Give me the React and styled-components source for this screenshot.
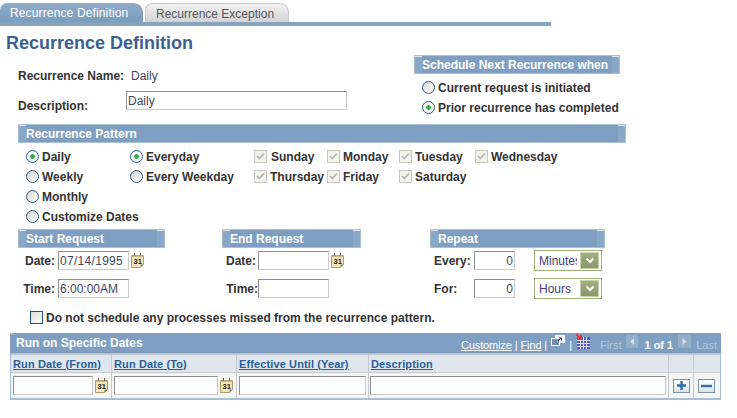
import React from "react";
import styled, { createGlobalStyle } from "styled-components";

const Global = createGlobalStyle`
  html, body { margin: 0; padding: 0; background: #fff; }
  body { font-family: "Liberation Sans", Arial, sans-serif; font-size: 12px; color: #333; }
`;

const Page = styled.div`
  width: 737px;
  height: 418px;
  overflow: hidden;
  padding-top: 3px;
  box-sizing: border-box;
`;
const TabBar = styled.div`
  display: flex;
  gap: 2px;
  width: 551px;
  height: 23px;
  box-sizing: border-box;
  border-bottom: 4px solid #86a3c0;
`;
const Tab = styled.div`
  width: ${p => p.$w}px;
  height: 19px;
  box-sizing: border-box;
  padding-left: 10px;
  font-size: 12px;
  line-height: 20px;
  letter-spacing: ${p => p.$active ? "0.14px" : "0"};
  border-radius: 7px 9px 0 0;
  color: ${p => p.$active ? "#fff" : "#555"};
  background: ${p => p.$active ? "linear-gradient(#8fabc8, #7c9cbd)" : "linear-gradient(#f1f1f1, #d4d4d6)"};
  border: ${p => p.$active ? "0" : "1px solid #c8c8c8"};
  border-bottom: 0;
`;
const Title = styled.h1`
  margin: 5px 0 0 6px;
  font-size: 18px;
  line-height: 24px;
  font-weight: bold;
  color: #3b5f8e;
`;
const Top = styled.div`
  display: flex;
  padding-left: 18px;
`;
const TopLeft = styled.div`
  width: 396px;
  padding-top: 14px;
`;
const NameRow = styled.div`
  display: flex;
  height: 16px;
  line-height: 15px;
`;
const DescRow = styled.div`
  display: flex;
  margin-top: 6px;
`;
const Label = styled.span`
  font-weight: bold;
  color: #333;
  white-space: nowrap;
`;
const NameLabel = styled(Label)`
  width: 113px;
`;
const DescLabel = styled(Label)`
  width: 108px;
  padding-top: 8px;
`;
const Value = styled.span`
  color: #3f3f5f;
`;
const TopRight = styled.div`
  width: 206px;
`;
const SectionBar = styled.div`
  position: relative;
  width: ${p => p.$w}px;
  height: 19px;
  box-sizing: border-box;
  border: 1px solid #a8c0d8;
  background: #7f9fc2;
  color: #fff;
  font-weight: bold;
  font-size: 12px;
  line-height: 19px;
  padding-left: 7px;
  &::before, &::after {
    content: "";
    position: absolute;
    top: 0;
    width: 7px;
    height: 17px;
    background: linear-gradient(#dfe8f0 0 1px, #8aa7c6 1px);
  }
  &::before { left: 0; }
  &::after { right: 0; }
`;
const SectionRow = styled.div`
  display: flex;
  padding-left: 18px;
  margin-top: ${p => p.$top}px;
`;
const RadioStack = styled.div`
  display: flex;
  flex-direction: column;
  gap: 5px;
  padding: 6px 0 0 8px;
`;
const Opt = styled.label`
  display: flex;
  align-items: center;
  height: 15px;
  font-weight: bold;
  color: #333;
  white-space: nowrap;
  gap: ${p => p.$gap ?? 3}px;
`;
const Radio = styled.span`
  flex: none;
  width: 13px;
  height: 13px;
  box-sizing: border-box;
  border-radius: 50%;
  border: 1px solid #2a5a85;
  background: ${p => p.$on
    ? "radial-gradient(circle, #2fb344 0 2px, #d9f0d9 2.6px, #fff 3px, #ecece6 100%)"
    : "linear-gradient(135deg, #d6d6d0, #fff)"};
`;
const Pattern = styled.div`
  display: flex;
  padding: 6px 0 0 26px;
  height: 75px;
`;
const Col = styled.div`
  display: flex;
  flex-direction: column;
  gap: 5px;
  width: ${p => p.$w}px;
`;
const Days = styled.div`
  display: grid;
  grid-template-columns: 73px 72px 76px auto;
  grid-auto-rows: 15px;
  row-gap: 5px;
  justify-content: start;
`;
const Check = styled.span`
  flex: none;
  display: inline-flex;
  width: 13px;
  height: 13px;
  box-sizing: border-box;
  border: 1px solid ${p => p.$off ? "#c8c6bc" : "#1f5180"};
  background: ${p => p.$off ? "#f3f3ee" : "linear-gradient(135deg, #dcdcd6, #fff)"};
`;
const TickIcon = () => (
  <svg width="11" height="11" viewBox="0 0 11 11">
    <path d="M2 5l2.3 2.4L9 2.6" fill="none" stroke="#b9b9b0" strokeWidth="1.8" />
  </svg>
);
const ReqCol = styled.div`
  width: ${p => p.$w}px;
`;
const FieldGrid = styled.div`
  display: grid;
  grid-template-columns: ${p => p.$cols};
  grid-auto-rows: 19px;
  row-gap: 9px;
  padding-top: 3px;
  align-items: center;
`;
const RightLabel = styled(Label)`
  text-align: right;
  padding-right: ${p => p.$pr}px;
`;
const RepeatLabel = styled(Label)`
  padding-left: 4px;
`;
const Input = styled.input`
  display: block;
  width: ${p => p.$w}px;
  height: 19px;
  box-sizing: border-box;
  padding: 0 1px;
  margin: 0;
  border: 1px solid;
  border-color: #8f8f8f #cacaca #cacaca #8f8f8f;
  background: #fff;
  color: #444460;
  font: 12px "Liberation Sans", Arial, sans-serif;
  letter-spacing: ${p => p.$spaced ? "0.3px" : "0"};
  text-align: ${p => p.$right ? "right" : "left"};
  outline: none;
`;
const DateCell = styled.div`
  display: flex;
  align-items: center;
  gap: 2px;
`;
const Cal = () => (
  <svg width="13" height="15" viewBox="0 0 13 15" style={{ flex: "none" }}>
    <path d="M.5 2.5h12v9l-3 3h-9z" fill="#f3e5b5" stroke="#a89a70" />
    <path d="M.5 2.5h12v1.5H.5z" fill="#c9b884" />
    <path d="M3.5 0v3M9.5 0v3" stroke="#6f6a55" />
    <path d="M12.5 11.5l-3 3v-3z" fill="#8f8460" />
    <text x="2.5" y="10.5" fontSize="7.5" fontWeight="bold" fontFamily="Liberation Sans" fill="#222">31</text>
  </svg>
);
const SelectBox = styled.div`
  display: flex;
  align-items: center;
  width: 68px;
  height: 21px;
  box-sizing: border-box;
  border: 1px solid #9fb277;
  padding: 0 2px 0 4px;
  color: #443d78;
  font-size: 12px;
  background: #fff;
`;
const SelectText = styled.span`
  width: 39px;
  overflow: hidden;
  white-space: nowrap;
  margin-right: 3px;
`;
const SelectBtn = styled.span`
  flex: none;
  display: inline-flex;
  align-items: center;
  justify-content: center;
  width: 19px;
  height: 17px;
  box-sizing: border-box;
  border: 1px solid #c9d2b0;
  background: linear-gradient(#a3ae84, #8a9868);
`;
const Chevron = () => (
  <svg width="10" height="7" viewBox="0 0 10 7">
    <path d="M1.5 1.5L5 5l3.5-3.5" fill="none" stroke="#fff" strokeWidth="2" />
  </svg>
);
const NoMiss = styled.label`
  display: flex;
  align-items: center;
  gap: 3px;
  height: 15px;
  margin: 12px 0 0 30px;
  font-weight: bold;
  color: #333;
`;
const GridBox = styled.div`
  width: 711px;
  margin: 8px 0 0 10px;
  box-sizing: border-box;
  border: 1px solid #a6bed6;
  border-top: 0;
  border-bottom-width: 2px;
`;
const GridTitle = styled.div`
  display: flex;
  align-items: center;
  height: 20px;
  margin: 0 -1px;
  padding: 0 3px 0 6px;
  border-radius: 4px 0 0 0;
  background: #7f9fc2;
  color: #fff;
  font-weight: bold;
  font-size: 12px;
`;
const GridName = styled.span`
  flex: 1;
`;
const Nav = styled.div`
  display: flex;
  align-items: center;
  padding-top: 4px;
  font-size: 11px;
  font-weight: normal;
  color: #fff;
`;
const NavLink = styled.span`
  text-decoration: underline;
  letter-spacing: -0.15px;
`;
const Sep = styled.span`
  margin: ${p => p.$m || "0 3px"};
`;
const Dim = styled.span`
  color: #b5c5d8;
  margin: ${p => p.$m};
`;
const Count = styled.span`
  font-weight: bold;
  margin: 0 5px 0 6px;
`;
const Cols = styled.div`
  display: grid;
  grid-template-columns: 101px 125px 132px 300px 25px 25px;
  background: ${p => p.$head ? "#dfe6ed" : "#f6f6f5"};
  height: ${p => p.$h}px;
  border-top: 1px solid #c4cad0;
`;
const HeadRowTop = styled.div`
  height: 1px;
  background: #a6bed6;
  margin: 0 -1px;
`;
const Cell = styled.div`
  display: flex;
  align-items: center;
  gap: 2px;
  box-sizing: border-box;
  padding-left: ${p => p.$pad ?? 2}px;
  border-right: ${p => p.$last ? "0" : "1px solid #c4cad0"};
`;
const HeadLink = styled.span`
  font-weight: bold;
  font-size: 11px;
  letter-spacing: 0.12px;
  color: #2a5f99;
  text-decoration: underline;
  white-space: nowrap;
`;
const SquareBtn = styled.span`
  display: inline-flex;
  align-items: center;
  justify-content: center;
  width: 17px;
  height: 14px;
  box-sizing: border-box;
  border: 1px solid #7a93a8;
  background: linear-gradient(#fff, #dbe3ea);
`;
const PlusIcon = () => (
  <svg width="9" height="9" viewBox="0 0 9 9"><path d="M4.5 0v9M0 4.5h9" stroke="#2f6eab" strokeWidth="2.4" /></svg>
);
const MinusIcon = () => (
  <svg width="11" height="4" viewBox="0 0 11 4"><path d="M0 2h11" stroke="#2f6eab" strokeWidth="2.4" /></svg>
);
const ZoomIcon = () => (
  <svg width="14" height="11" viewBox="0 0 14 11" style={{ marginTop: -9, marginLeft: 1 }}>
    <rect x="4.5" y=".5" width="9" height="7" fill="#e8eef4" stroke="#fff" />
    <rect x=".5" y="3.5" width="8" height="7" fill="#6f8db0" stroke="#fff" />
    <path d="M7 6l3-3M8 3h2.5v2.5" fill="none" stroke="#334" />
  </svg>
);
const ColsIcon = () => (
  <svg width="14" height="15" viewBox="0 0 14 15" style={{ marginTop: -8 }}>
    <rect x="1" y="3" width="13" height="12" fill="#5a55c4" />
    <path d="M4.5 3v12M7.5 3v12M10.5 3v12M1 6.5h13M1 9.5h13M1 12.5h13" stroke="#dcdcf4" />
    <path d="M0 0l5 5M5 1v4H1" fill="none" stroke="#e33" strokeWidth="1.8" />
  </svg>
);
const ArrowBox = ({ dir, w }) => (
  <svg width={w} height="13" viewBox={`0 0 ${w} 13`} style={{ marginTop: -7 }}>
    <rect width={w} height="13" fill="#95afcb" />
    <path d={dir === "l" ? "M8 3v7L4 6.5z" : "M4.5 3v7l4-3.5z"} fill="#d6e0ea" />
  </svg>
);

const days = [
  ["Sunday", 4], ["Monday", 3], ["Tuesday", 3], ["Wednesday", 3],
  ["Thursday", 3], ["Friday", 3], ["Saturday", 3],
];

export default function App() {
  return (
    <Page>
      <Global />
      <TabBar>
        <Tab $active $w={143}>Recurrence Definition</Tab>
        <Tab $w={144}>Recurrence Exception</Tab>
      </TabBar>
      <Title>Recurrence Definition</Title>
      <Top>
        <TopLeft>
          <NameRow>
            <NameLabel>Recurrence Name:</NameLabel>
            <Value>Daily</Value>
          </NameRow>
          <DescRow>
            <DescLabel>Description:</DescLabel>
            <Input $w={221} value="Daily" readOnly />
          </DescRow>
        </TopLeft>
        <TopRight>
          <SectionBar $w={206}>Schedule Next Recurrence when</SectionBar>
          <RadioStack>
            <Opt><Radio />Current request is initiated</Opt>
            <Opt><Radio $on />Prior recurrence has completed</Opt>
          </RadioStack>
        </TopRight>
      </Top>
      <SectionRow $top={9}>
        <SectionBar $w={608}>Recurrence Pattern</SectionBar>
      </SectionRow>
      <Pattern>
        <Col $w={104}>
          <Opt><Radio $on />Daily</Opt>
          <Opt><Radio />Weekly</Opt>
          <Opt><Radio />Monthly</Opt>
          <Opt><Radio />Customize Dates</Opt>
        </Col>
        <Col $w={124}>
          <Opt><Radio $on />Everyday</Opt>
          <Opt><Radio />Every Weekday</Opt>
        </Col>
        <Days>
          {days.map(([d, g]) => (
            <Opt key={d} $gap={g}><Check $off><TickIcon /></Check>{d}</Opt>
          ))}
        </Days>
      </Pattern>
      <SectionRow $top={5}>
        <ReqCol $w={204}>
          <SectionBar $w={147}>Start Request</SectionBar>
          <FieldGrid $cols="40px 1fr">
            <RightLabel $pr={3}>Date:</RightLabel>
            <DateCell><Input $w={71} $spaced value="07/14/1995" readOnly /><Cal /></DateCell>
            <RightLabel $pr={3}>Time:</RightLabel>
            <DateCell><Input $w={71} value="6:00:00AM" readOnly /></DateCell>
          </FieldGrid>
        </ReqCol>
        <ReqCol $w={208}>
          <SectionBar $w={139}>End Request</SectionBar>
          <FieldGrid $cols="36px 1fr">
            <RightLabel $pr={2}>Date:</RightLabel>
            <DateCell><Input $w={71} value="" readOnly /><Cal /></DateCell>
            <RightLabel $pr={0}>Time:</RightLabel>
            <DateCell><Input $w={71} value="" readOnly /></DateCell>
          </FieldGrid>
        </ReqCol>
        <ReqCol $w={175}>
          <SectionBar $w={175}>Repeat</SectionBar>
          <FieldGrid $cols="44px 60px 1fr">
            <RepeatLabel>Every:</RepeatLabel>
            <Input $w={41} $right value="0" readOnly />
            <SelectBox><SelectText>Minutes</SelectText><SelectBtn><Chevron /></SelectBtn></SelectBox>
            <RepeatLabel>For:</RepeatLabel>
            <Input $w={41} $right value="0" readOnly />
            <SelectBox><SelectText>Hours</SelectText><SelectBtn><Chevron /></SelectBtn></SelectBox>
          </FieldGrid>
        </ReqCol>
      </SectionRow>
      <NoMiss><Check />Do not schedule any processes missed from the recurrence pattern.</NoMiss>
      <GridBox>
        <GridTitle>
          <GridName>Run on Specific Dates</GridName>
          <Nav>
            <NavLink>Customize</NavLink><Sep>|</Sep>
            <NavLink>Find</NavLink><Sep>|</Sep>
            <ZoomIcon /><Sep $m="0 4px">|</Sep>
            <ColsIcon />
            <Dim $m="0 5px 0 10px">First</Dim>
            <ArrowBox dir="l" w={12} />
            <Count>1 of 1</Count>
            <ArrowBox dir="r" w={13} />
            <Dim $m="0 1px 0 5px">Last</Dim>
          </Nav>
        </GridTitle>
        <HeadRowTop />
        <Cols $head $h={17}>
          <Cell><HeadLink>Run Date (From)</HeadLink></Cell>
          <Cell><HeadLink>Run Date (To)</HeadLink></Cell>
          <Cell><HeadLink>Effective Until (Year)</HeadLink></Cell>
          <Cell><HeadLink>Description</HeadLink></Cell>
          <Cell />
          <Cell $last />
        </Cols>
        <Cols $h={25}>
          <Cell><Input $w={80} value="" readOnly /><Cal /></Cell>
          <Cell><Input $w={104} value="" readOnly /><Cal /></Cell>
          <Cell><Input $w={127} value="" readOnly /></Cell>
          <Cell $pad={1}><Input $w={296} value="" readOnly /></Cell>
          <Cell $pad={4}><SquareBtn><PlusIcon /></SquareBtn></Cell>
          <Cell $pad={4} $last><SquareBtn><MinusIcon /></SquareBtn></Cell>
        </Cols>
      </GridBox>
    </Page>
  );
}
